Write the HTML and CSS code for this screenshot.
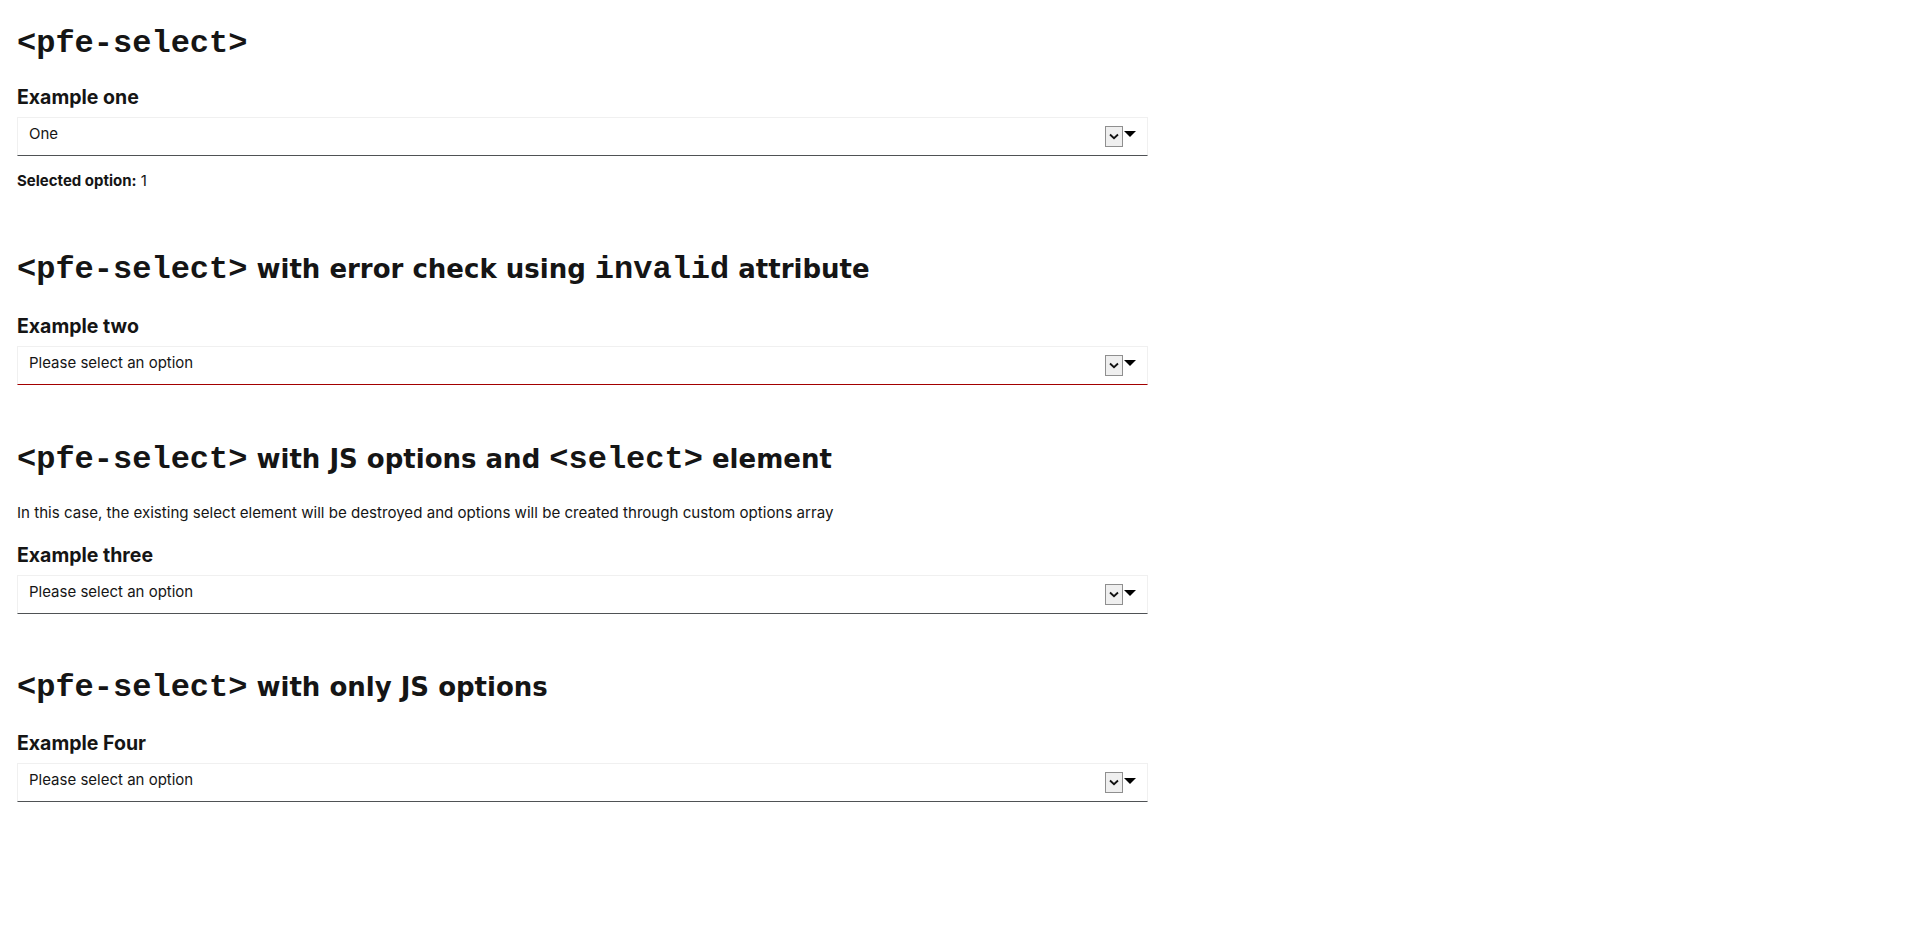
FILE: index.html
```html
<!DOCTYPE html>
<html lang="en">
<head>
<meta charset="utf-8">
<title>pfe-select</title>
<link rel="stylesheet" href="styles.css">
</head>
<body>
<main class="page">
  <section class="demo demo-first">
    <h2 class="title"><code class="tag">&lt;pfe-select&gt;</code></h2>
    <div class="field field-first">
      <div class="label">Example one</div>
      <div class="select">
        <span class="value">One</span>
        <span class="native"><svg width="10" height="7" viewBox="0 0 10 7"><path d="M1 1.5 L5 5.2 L9 1.5" fill="none" stroke="#111" stroke-width="1.8"/></svg></span>
        <span class="caret"></span>
      </div>
    </div>
    <p class="selected"><b>Selected option:</b> 1</p>
  </section>

  <section class="demo">
    <h2 class="title"><code class="tag">&lt;pfe-select&gt;</code> with error check using <code class="tag">invalid</code> attribute</h2>
    <div class="field">
      <div class="label">Example two</div>
      <div class="select select-invalid">
        <span class="value">Please select an option</span>
        <span class="native"><svg width="10" height="7" viewBox="0 0 10 7"><path d="M1 1.5 L5 5.2 L9 1.5" fill="none" stroke="#111" stroke-width="1.8"/></svg></span>
        <span class="caret"></span>
      </div>
    </div>
  </section>

  <section class="demo">
    <h2 class="title"><code class="tag">&lt;pfe-select&gt;</code> with JS options and <code class="tag">&lt;select&gt;</code> element</h2>
    <p class="note">In this case, the existing select element will be destroyed and options will be created through custom options array</p>
    <div class="field">
      <div class="label">Example three</div>
      <div class="select">
        <span class="value">Please select an option</span>
        <span class="native"><svg width="10" height="7" viewBox="0 0 10 7"><path d="M1 1.5 L5 5.2 L9 1.5" fill="none" stroke="#111" stroke-width="1.8"/></svg></span>
        <span class="caret"></span>
      </div>
    </div>
  </section>

  <section class="demo demo-last">
    <h2 class="title"><code class="tag">&lt;pfe-select&gt;</code> with only JS options</h2>
    <div class="field">
      <div class="label">Example Four</div>
      <div class="select">
        <span class="value">Please select an option</span>
        <span class="native"><svg width="10" height="7" viewBox="0 0 10 7"><path d="M1 1.5 L5 5.2 L9 1.5" fill="none" stroke="#111" stroke-width="1.8"/></svg></span>
        <span class="caret"></span>
      </div>
    </div>
  </section>
</main>
</body>
</html>
```

FILE: styles.css
```css
html, body {
  margin: 0;
  padding: 0;
  background: #ffffff;
  color: #151515;
}

.page {
  padding: 0 17px;
  font-family: Inter, "Noto Sans", sans-serif;
}

.demo {
  display: flex;
  flex-direction: column;
  width: 1131px;
}

.title {
  margin: 0;
  font-family: "DejaVu Sans", sans-serif;
  font-weight: 700;
  font-size: 26px;
  line-height: 40px;
  color: #151515;
}

.tag {
  font-family: "Liberation Mono", monospace;
  font-weight: 700;
  font-size: 32px;
}

.demo-first {
  padding-top: 23px;
}

.demo + .demo {
  margin-top: 54.5px;
}

.demo + .demo-last {
  margin-top: 53px;
}

.field {
  display: flex;
  flex-direction: column;
  gap: 8px;
  margin-top: 23.2px;
}

.field-first {
  margin-top: 20.8px;
}

.label {
  font-weight: 700;
  font-size: 19.5px;
  line-height: 24px;
}

.select {
  display: flex;
  align-items: center;
  height: 37px;
  border: 1px solid #f0f0f0;
  border-bottom-color: #4f5255;
  padding: 0 11px;
  font-size: 15px;
  color: #151515;
}

.select-invalid {
  border-bottom-color: #a30000;
}

.value {
  flex: 1;
  padding-bottom: 6px;
}

.native {
  width: 16px;
  height: 19px;
  border: 1px solid #8f8f8f;
  background: #efefef;
  display: flex;
  align-items: center;
  justify-content: center;
  margin-right: 1px;
}

.caret {
  width: 0;
  height: 0;
  border-left: 6px solid transparent;
  border-right: 6px solid transparent;
  border-top: 6px solid #000;
  margin-top: -4px;
}

.selected {
  margin: 15.5px 0 3.7px;
  font-size: 15px;
  line-height: 20px;
}

.note {
  margin: 23.2px 0 0;
  font-size: 15.1px;
  line-height: 20px;
}

.note + .field {
  margin-top: 19.7px;
}
```
